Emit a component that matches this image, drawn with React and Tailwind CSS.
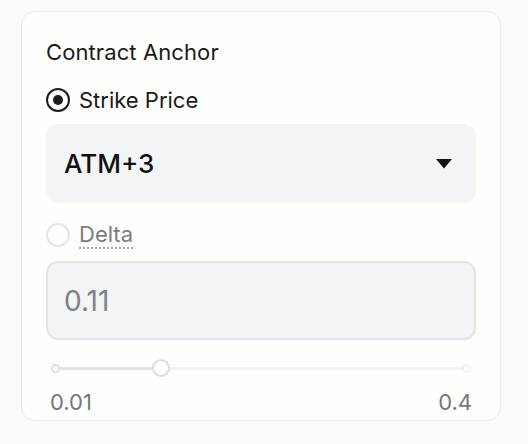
import React, { useState } from 'react';

const font = { fontFamily: 'Inter, "Noto Sans", sans-serif' };

const Caret = () => (
  <svg width="16" height="10" viewBox="0 0 16 10" className="shrink-0">
    <path d="M0 0 H16 L8 9.5 Z" fill="#111111" />
  </svg>
);

const ContractAnchor = () => {
  const [mode, setMode] = useState('strike'); // strike | delta
  const [delta] = useState(0.11);

  const min = 0.01;
  const max = 0.4;
  const pct = ((delta - min) / (max - min)) * 100;

  return (
    <div className="min-h-screen w-full bg-[#fbfbf9] pt-[11px] pl-[21px]" style={font}>
      <div className="w-[480px] h-[410px] rounded-[14px] border border-[#ececea] bg-[#fefefd] px-6 pt-[26px]">
        {/* Title */}
        <h2 className="text-[22px] leading-[28px] text-[#1a1a1a] font-normal tracking-[0.1px]">Contract Anchor</h2>

        {/* Strike price option */}
        <label className="mt-5 flex h-7 items-center gap-[9px] cursor-pointer" onClick={() => setMode('strike')}>
          <span className="flex h-6 w-6 items-center justify-center rounded-full border-2 border-[#1c1c1c]">
            <span className="h-[10px] w-[10px] rounded-full bg-[#1c1c1c]" />
          </span>
          <span className="text-[22px] leading-[28px] text-[#1a1a1a]">Strike Price</span>
        </label>

        {/* Strike select */}
        <div className="mt-[10px] flex h-[79px] items-center justify-between rounded-xl bg-[#f3f4f6] pl-[18px] pr-6">
          <span className="text-[26px] font-medium text-[#111111]">ATM+3</span>
          <Caret />
        </div>

        {/* Delta option */}
        <label className="mt-[18px] flex h-7 items-center gap-[9px] cursor-pointer" onClick={() => setMode('delta')}>
          <span className="h-6 w-6 rounded-full border-2 border-[#e5e5e5]" />
          <span className="text-[22px] leading-[26px] text-[#7c7c80] border-b-2 border-dotted border-[#a3a3a8]">Delta</span>
        </label>

        {/* Delta input */}
        <div className="mt-3 flex h-[79px] items-center rounded-xl border-2 border-[#e3e4e6] bg-[#f3f4f6] pl-4">
          <span className="text-[28px] text-[#808085]">{delta.toFixed(2)}</span>
        </div>

        {/* Slider */}
        <div className="relative mx-[5px] mt-[19px] h-[18px]">
          <div className="absolute left-[4px] right-[4px] top-[8px] h-[3px] rounded-full bg-[#f2f2f2]" />
          <div className="absolute left-[4px] top-[8px] h-[3px] bg-[#e4e4e4]" style={{ width: `${pct}%` }} />
          <span className="absolute left-0 top-[5px] h-[9px] w-[9px] rounded-full border-2 border-[#dedede] bg-white" />
          <span className="absolute right-0 top-[5px] h-[9px] w-[9px] rounded-full border-2 border-[#efefef] bg-white" />
          <span
            className="absolute top-0 h-[18px] w-[18px] -translate-x-1/2 rounded-full border-2 border-[#dcdcdc] bg-white"
            style={{ left: `calc(4px + ${pct}% - ${pct * 0.08}px)` }}
          />
        </div>

        {/* Range labels */}
        <div className="mt-[12px] flex justify-between px-[4px] text-[22px] leading-[26px] text-[#77777b]">
          <span>0.01</span>
          <span>0.4</span>
        </div>
      </div>
    </div>
  );
};

export default function App() {
  return <ContractAnchor />;
}
